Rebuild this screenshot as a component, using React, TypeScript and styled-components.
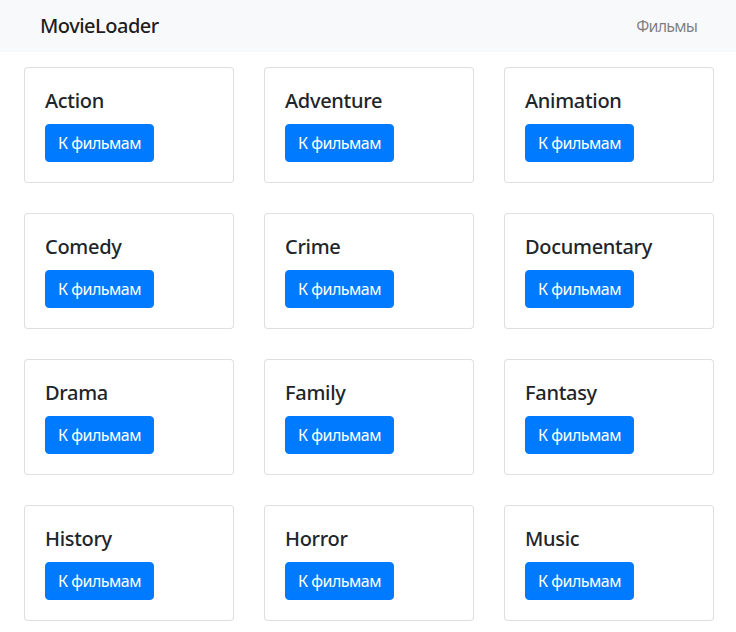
import React from "react";
import styled, { createGlobalStyle } from "styled-components";

const Global = createGlobalStyle`
  html, body { margin: 0; padding: 0; background: #fff; }
  body {
    font-family: "Noto Sans", "Open Sans", sans-serif;
    font-size: 16px;
    line-height: 1.5;
    color: #212529;
  }
  * { box-sizing: border-box; }
`;

const Navbar = styled.nav`
  height: 52px;
  background: #f8f9fa;
  display: flex;
  align-items: center;
  justify-content: space-between;
  padding: 0 39px 0 40px;
`;

const Brand = styled.a`
  font-size: 20px;
  line-height: 1.5;
  letter-spacing: -0.5px;
  color: rgba(0, 0, 0, 0.9);
  text-decoration: none;
  font-weight: 500;
`;

const NavLink = styled.a`
  font-size: 16px;
  letter-spacing: -0.8px;
  color: rgba(0, 0, 0, 0.5);
  text-decoration: none;
`;

const Grid = styled.main`
  display: grid;
  grid-template-columns: repeat(3, 210px);
  column-gap: 30px;
  row-gap: 30px;
  padding: 15px 0 0 24px;
`;

const Card = styled.div`
  border: 1px solid rgba(0, 0, 0, 0.125);
  border-radius: 4px;
  padding: 20px;
  background: #fff;
`;

const Title = styled.h5`
  margin: 0 0 11px;
  padding-top: 1px;
  font-size: 20px;
  font-weight: 500;
  line-height: 1.2;
  letter-spacing: -0.3px;
`;

const Button = styled.a`
  display: inline-block;
  height: 38px;
  padding: 6px 12px;
  font-size: 16px;
  line-height: 24px;
  letter-spacing: -0.5px;
  color: #fff;
  background: #007bff;
  border: 1px solid #007bff;
  border-radius: 4px;
  text-decoration: none;
`;

const genres = [
  "Action", "Adventure", "Animation",
  "Comedy", "Crime", "Documentary",
  "Drama", "Family", "Fantasy",
  "History", "Horror", "Music",
];

export default function App() {
  return (
    <>
      <Global />
      <Navbar>
        <Brand href="#">MovieLoader</Brand>
        <NavLink href="#">Фильмы</NavLink>
      </Navbar>
      <Grid>
        {genres.map((g) => (
          <Card key={g}>
            <Title>{g}</Title>
            <Button href="#">К фильмам</Button>
          </Card>
        ))}
      </Grid>
    </>
  );
}
